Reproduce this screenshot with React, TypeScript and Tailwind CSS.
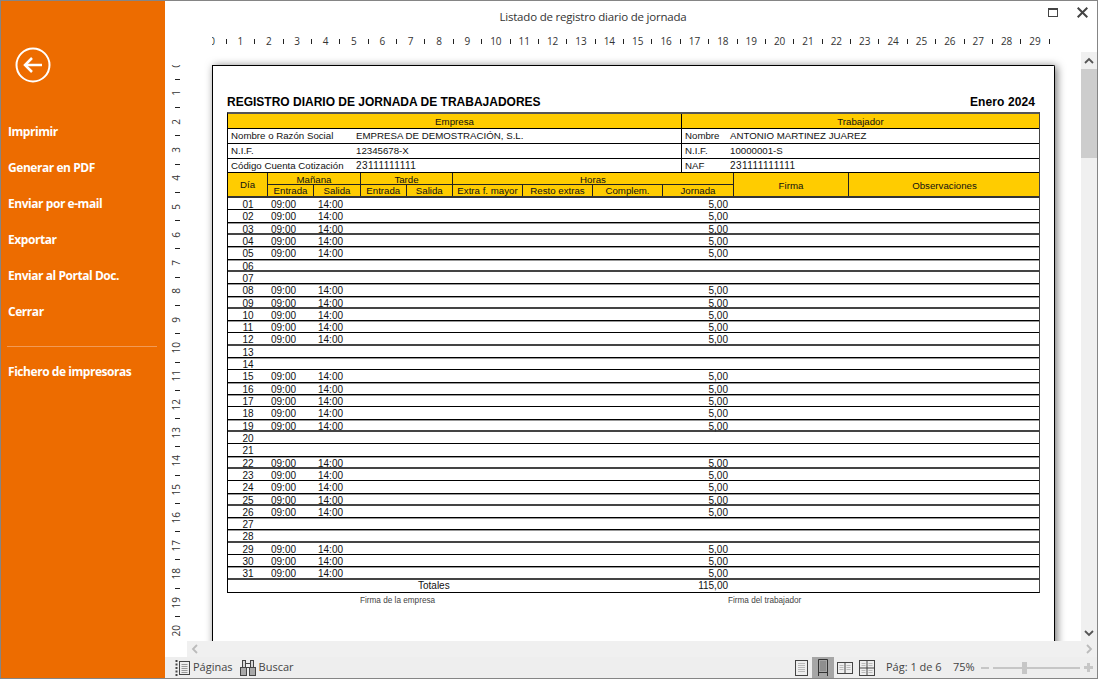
const SANS = "font-['Open_Sans','Noto_Sans',sans-serif]";

const MENU = ['Imprimir', 'Generar en PDF', 'Enviar por e-mail', 'Exportar', 'Enviar al Portal Doc.', 'Cerrar'];
const EMPTY_DAYS = [6, 7, 13, 14, 20, 21, 27, 28];
const DAYS = Array.from({ length: 31 }, (_, i) => i + 1);
const COLS = 'grid grid-cols-[40px_47px_46px_46px_46px_70px_70px_71px_70px_115px_191px]';

// row rules in the report are uneven from the print scaling
const RULES = 'KGDGGDGGDGKDGKGGKGDKGDKGDGGDKGD';
const RULE_CLS: Record<string, string> = {
  K: 'border-b border-black',
  G: 'border-b border-black shadow-[0_1px_0_#999]',
  D: 'border-b-2 border-[#444]',
};

function HRuler() {
  return (
    <div className="ml-[47px] h-[19px] w-[850px] overflow-hidden">
      <div className="-ml-[7px] flex h-full w-[860px] items-center pb-[3px] text-[10px] text-[#333]">
        {Array.from({ length: 30 }, (_, n) => (
          <div key={n} className="flex">
            <span className="w-[14.19px] text-center leading-none">{n}</span>
            <span className="flex w-[14.19px] items-center justify-center">
              <span className="h-[5px] w-px bg-[#222]" />
            </span>
          </div>
        ))}
      </div>
    </div>
  );
}

function VRuler() {
  return (
    <div className="mt-[13px] w-[22px] shrink-0 overflow-hidden">
      <div className="-mt-[7px] flex flex-col pl-[4px] text-[10px] text-[#333]">
        {Array.from({ length: 21 }, (_, n) => (
          <div key={n} className="flex flex-col">
            <span className="flex h-[14.15px] w-[14px] items-center justify-center">
              <span className="leading-none [writing-mode:vertical-rl] rotate-180">{n}</span>
            </span>
            <span className="flex h-[14.15px] w-[16px] items-center justify-center">
              <span className="h-px w-[5px] bg-[#222]" />
            </span>
          </div>
        ))}
      </div>
    </div>
  );
}

function InfoRow({ label, value, label2, value2, last, digits }: { label: string; value: string; label2: string; value2: string; last?: boolean; digits?: boolean }) {
  const valueCls = digits ? 'text-[10px] tracking-[0.45px]' : '';
  return (
    <div className={`flex border-b border-black text-[9.7px] ${last ? 'h-[14px]' : 'h-[15px]'}`}>
      <div className="flex w-[454px] items-center border-r border-black pl-[3px]">
        <span className="w-[125px]">{label}</span>
        <span className={valueCls}>{value}</span>
      </div>
      <div className="flex flex-1 items-center pl-[3px]">
        <span className="w-[45px]">{label2}</span>
        <span className={valueCls}>{value2}</span>
      </div>
    </div>
  );
}

function SubHead({ children, last }: { children: React.ReactNode; last?: boolean }) {
  return <div className={`flex items-center justify-center pt-[1px] ${last ? '' : 'border-r border-[#222]'}`}>{children}</div>;
}

function Sheet() {
  return (
    <div className="h-[640px] w-[843px] shrink-0 rounded-tr-[2px] border-x border-t border-black bg-white pl-[14px] font-['Liberation_Sans',Arial,sans-serif] text-[10px] leading-none text-[#111] shadow-[2px_1px_9px_rgba(0,0,0,0.55)]">
      <div className="flex h-[46px] w-[808px] items-end justify-between pb-[4px] text-[12px] font-bold text-black">
        <span>REGISTRO DIARIO DE JORNADA DE TRABAJADORES</span>
        <span className="tracking-[0.1px]">Enero 2024</span>
      </div>
      <div className="w-[813px] border-x border-t-2 border-l-black border-r-[#444] border-t-[#555] border-b border-b-black">
        <div className="flex h-[15px] border-b border-black bg-[#ffcc00] pt-0 text-[9.7px]">
          <div className="flex w-[454px] items-center justify-center border-r border-black pt-[2px]">Empresa</div>
          <div className="flex flex-1 items-center justify-center pt-[2px]">Trabajador</div>
        </div>
        <InfoRow label="Nombre o Razón Social" value="EMPRESA DE DEMOSTRACIÓN, S.L." label2="Nombre" value2="ANTONIO MARTINEZ JUAREZ" />
        <InfoRow label="N.I.F." value="12345678-X" label2="N.I.F." value2="10000001-S" />
        <InfoRow label="Código Cuenta Cotización" value="23111111111" label2="NAF" value2="231111111111" last digits />
        <div className="grid h-[25px] grid-cols-[40px_93px_92px_281px_115px_191px] border-b-2 border-[#333] bg-[#ffcc00] text-[9.7px]">
          <div className="flex items-center justify-center border-r border-[#222] pt-[1px]">Día</div>
          <div className="flex flex-col border-r border-[#222]">
            <div className="flex h-[12px] items-center justify-center border-b border-[#222] pt-[2px]">Mañana</div>
            <div className="grid flex-1 grid-cols-2">
              <SubHead>Entrada</SubHead>
              <SubHead last>Salida</SubHead>
            </div>
          </div>
          <div className="flex flex-col border-r border-[#222]">
            <div className="flex h-[12px] items-center justify-center border-b border-[#222] pt-[2px]">Tarde</div>
            <div className="grid flex-1 grid-cols-2">
              <SubHead>Entrada</SubHead>
              <SubHead last>Salida</SubHead>
            </div>
          </div>
          <div className="flex flex-col border-r border-[#222]">
            <div className="flex h-[12px] items-center justify-center border-b border-[#222] pt-[2px]">Horas</div>
            <div className="grid flex-1 grid-cols-4">
              <SubHead>Extra f. mayor</SubHead>
              <SubHead>Resto extras</SubHead>
              <SubHead>Complem.</SubHead>
              <SubHead last>Jornada</SubHead>
            </div>
          </div>
          <div className="flex items-center justify-center border-r border-[#222] pt-[2px]">Firma</div>
          <div className="flex items-center justify-center pt-[2px]">Observaciones</div>
        </div>
        {DAYS.map((d, i) => {
          const empty = EMPTY_DAYS.includes(d);
          return (
            <div key={d} className={`${COLS} h-[12.32px] items-center pt-[2px] ${RULE_CLS[RULES[i]]}`}>
              <span className="text-center">{String(d).padStart(2, '0')}</span>
              <span className="pl-[3px]">{empty ? '' : '09:00'}</span>
              <span className="pl-[3px]">{empty ? '' : '14:00'}</span>
              <span className="col-span-5" />
              <span className="pr-[6px] text-right">{empty ? '' : '5,00'}</span>
            </div>
          );
        })}
        <div className={`${COLS} h-[12px] items-center`}>
          <span className="col-span-5 pl-[190px]">Totales</span>
          <span className="col-span-4 pr-[6px] text-right">115,00</span>
        </div>
      </div>
      <div className="flex pt-[4px] text-[8.2px] text-[#444]">
        <span className="ml-[133px] w-[368px]">Firma de la empresa</span>
        <span>Firma del trabajador</span>
      </div>
    </div>
  );
}

function Chevron({ d }: { d: string }) {
  return (
    <svg width="10" height="10" viewBox="0 0 10 10" fill="none" stroke="currentColor" strokeWidth="1.8">
      <path d={d} />
    </svg>
  );
}

function PagesIcon() {
  return (
    <svg width="15" height="17" viewBox="0 0 15 17" fill="none" stroke="#444">
      <path d="M1.5 1v2M1.5 4.5v2M1.5 8v2M1.5 11.5v2M1.5 15v2" strokeWidth="2" />
      <rect x="4.5" y="2.5" width="10" height="13" />
      <path d="M6.5 5.5h6M6.5 7.5h6M6.5 9.5h6M6.5 11.5h6M6.5 13.5h6" stroke="#999" />
    </svg>
  );
}

function BinocularIcon() {
  return (
    <svg width="16" height="17" viewBox="0 0 16 17" fill="#a8a8a8" stroke="#444">
      <rect x="0.5" y="8.5" width="6" height="8" />
      <rect x="9.5" y="8.5" width="6" height="8" />
      <rect x="2.5" y="1.5" width="3" height="7" fill="#d8d8d8" />
      <rect x="10.5" y="1.5" width="3" height="7" fill="#d8d8d8" />
      <path d="M5.5 4.5h5M6.5 8.5h3" fill="none" />
    </svg>
  );
}

function SinglePage() {
  return (
    <svg width="13" height="16" viewBox="0 0 13 16" fill="none">
      <rect x="0.5" y="0.5" width="12" height="15" stroke="#444" />
      <path d="M3 3.5h7M3 5.5h7M3 7.5h7M3 9.5h7M3 11.5h7" stroke="#bbb" />
    </svg>
  );
}

function ContinuousPage() {
  return (
    <svg width="10" height="17" viewBox="0 0 10 17" fill="none">
      <path d="M.5 17V.5h9V17M0 13.5h10" stroke="#333" />
      <path d="M2 3h6M2 5h6M2 7h6M2 9h6M2 11h6" stroke="#777" />
    </svg>
  );
}

function BookPages() {
  return (
    <svg width="16" height="12" viewBox="0 0 16 12" fill="none">
      <rect x="0.5" y="0.5" width="15" height="11" stroke="#444" />
      <path d="M8 0v12" stroke="#444" />
      <path d="M2.5 3.5h4M2.5 5.5h4M2.5 7.5h4M9.5 3.5h4M9.5 5.5h4M9.5 7.5h4" stroke="#bbb" />
    </svg>
  );
}

function GridPages() {
  return (
    <svg width="16" height="16" viewBox="0 0 16 16" fill="none">
      <rect x="0.5" y="0.5" width="15" height="15" stroke="#444" />
      <path d="M8 0v16M0 8h16" stroke="#444" />
      <path d="M2.5 3.5h4M2.5 5.5h4M9.5 3.5h4M9.5 5.5h4M2.5 10.5h4M2.5 12.5h4M9.5 10.5h4M9.5 12.5h4" stroke="#bbb" />
    </svg>
  );
}

export default function App() {
  return (
    <div className={`flex h-[679px] w-[1098px] overflow-hidden border border-[#858585] bg-white ${SANS}`}>
      <aside className="flex w-[164px] shrink-0 flex-col bg-[#ed6c00] pt-[46px] text-white">
        <div className="ml-[14px] h-[36px] w-[36px]">
          <svg width="36" height="36" viewBox="0 0 36 36" fill="none" stroke="white">
            <circle cx="18" cy="18" r="16.5" strokeWidth="2" />
            <path d="M27 18H10.5" strokeWidth="2.5" />
            <path d="M17 11l-7 7 7 7" strokeWidth="2.5" />
          </svg>
        </div>
        <nav className="mt-[31px] flex flex-col pl-[7px] text-[12px] font-bold tracking-[-0.45px]">
          {MENU.map((m) => (
            <div key={m} className="flex h-[36px] items-center">
              {m}
            </div>
          ))}
        </nav>
        <div className="ml-[6px] mt-[16px] h-px w-[150px] bg-[#f29a55]" />
        <div className="mt-[7px] flex h-[36px] items-center pl-[7px] text-[12px] font-bold tracking-[-0.45px]">
          Fichero de impresoras
        </div>
      </aside>

      <main className="flex min-w-0 flex-1 flex-col">
        <header className="flex h-[32px] shrink-0 text-[#333]">
          <div className="w-[856px] pt-[7px] text-center text-[11.5px] tracking-[-0.2px]">Listado de registro diario de jornada</div>
          <div className="ml-[27px] flex items-start gap-[19px] pt-[6px]">
            <svg width="10" height="10" viewBox="0 0 10 10" fill="none" stroke="#444">
              <rect x="0.5" y="1.5" width="9" height="8" />
              <path d="M0 2.5h10" />
            </svg>
            <svg width="11" height="11" viewBox="0 0 11 11" fill="none" stroke="#444" strokeWidth="2">
              <path d="M.7.7l9.6 9.6M10.3.7L.7 10.3" />
            </svg>
          </div>
        </header>
        <HRuler />

        <div className="flex h-[589px] shrink-0">
          <VRuler />
          <div className="flex min-w-0 flex-1 overflow-hidden pl-[25px] pt-[13px]">
            <Sheet />
          </div>
          <div className="flex w-[16px] shrink-0 flex-col bg-[#f0f0f0] text-[#555]">
            <div className="flex h-[17px] items-center justify-center">
              <Chevron d="M1 7l4-4 4 4" />
            </div>
            <div className="h-[89px] bg-[#cdcdcd]" />
            <div className="flex-1" />
            <div className="flex h-[17px] items-center justify-center">
              <Chevron d="M1 3l4 4 4-4" />
            </div>
          </div>
        </div>

        <div className="flex h-[16px] shrink-0">
          <div className="w-[22px] bg-white" />
          <div className="flex flex-1 items-center justify-between bg-[#f0f0f0] px-[3px] text-[#bbb]">
            <Chevron d="M7 1L3 5l4 4" />
            <Chevron d="M3 1l4 4-4 4" />
          </div>
        </div>

        <footer className="flex h-[21px] shrink-0 items-center bg-[#eeeeee] text-[11px] text-[#444]">
          <div className="ml-[10px] flex items-center">
            <PagesIcon />
            <span className="ml-[3px]">Páginas</span>
          </div>
          <div className="ml-[7px] flex items-center">
            <BinocularIcon />
            <span className="ml-[3px]">Buscar</span>
          </div>
          <div className="ml-auto flex h-full items-center">
            <SinglePage />
            <div className="ml-[4px] flex h-full w-[22px] items-center justify-center bg-[#a6a6a6]">
              <ContinuousPage />
            </div>
            <div className="ml-[3px]">
              <BookPages />
            </div>
            <div className="ml-[6px]">
              <GridPages />
            </div>
            <span className="ml-[11px] w-[67px]">Pág: 1 de 6</span>
            <span className="w-[28px]">75%</span>
            <div className="h-[2px] w-[8px] bg-[#c6c6c6]" />
            <div className="ml-[4px] flex h-[2px] w-[87px] items-center bg-[#c6c6c6]">
              <div className="ml-[29px] h-[12px] w-[5px] shrink-0 bg-[#c6c6c6]" />
            </div>
            <svg className="ml-[4px] mr-[4px]" width="9" height="9" viewBox="0 0 9 9" fill="#c6c6c6">
              <path d="M3 0h3v3h3v3H6v3H3V6H0V3h3z" />
            </svg>
          </div>
        </footer>
      </main>
    </div>
  );
}
